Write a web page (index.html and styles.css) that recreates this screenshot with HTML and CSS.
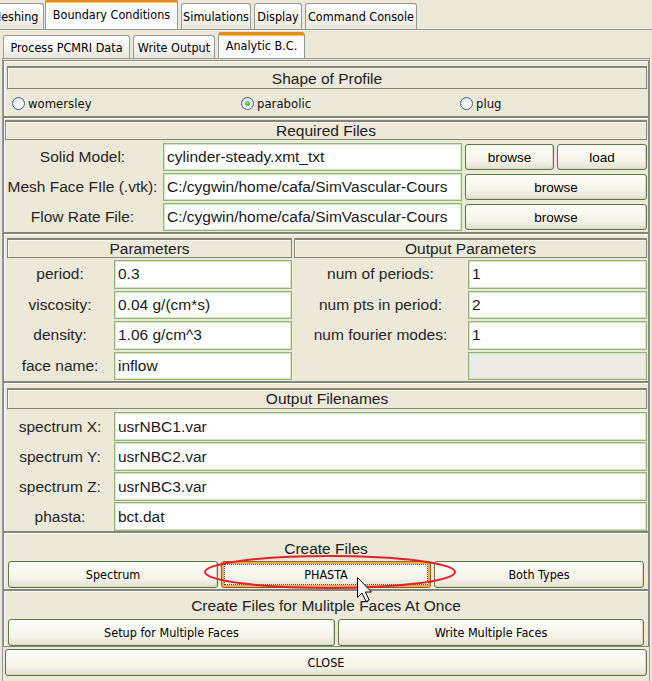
FILE: index.html
```html
<!DOCTYPE html>
<html>
<head>
<meta charset="utf-8">
<link rel="stylesheet" href="styles.css">
</head>
<body>
<div class="tabs1">
  <div class="tab t-mesh">Meshing</div>
  <div class="tab sel t-bc">Boundary Conditions</div>
  <div class="tab t-sim">Simulations</div>
  <div class="tab t-disp">Display</div>
  <div class="tab t-cc">Command Console</div>
</div>
<div class="tabs2">
  <div class="tab t-pc">Process PCMRI Data</div>
  <div class="tab t-wo">Write Output</div>
  <div class="tab sel t-abc">Analytic B.C.</div>
</div>
<div class="pane">
  <div class="sec s1">
    <div class="hdr">Shape of Profile</div>
    <div class="radios">
      <div class="radio"><span class="rb"></span>womersley</div>
      <div class="radio"><span class="rb on"></span>parabolic</div>
      <div class="radio"><span class="rb"></span>plug</div>
    </div>
  </div>
  <div class="sec s2">
    <div class="hdr">Required Files</div>
    <div class="req">
      <div class="lbl">Solid Model:</div>
      <div class="entry">cylinder-steady.xmt_txt</div>
      <div class="btn bt">browse</div>
      <div class="btn bt">load</div>
      <div class="lbl">Mesh Face FIle (.vtk):</div>
      <div class="entry">C:/cygwin/home/cafa/SimVascular-Cours</div>
      <div class="btn bt span2">browse</div>
      <div class="lbl">Flow Rate File:</div>
      <div class="entry">C:/cygwin/home/cafa/SimVascular-Cours</div>
      <div class="btn bt span2">browse</div>
    </div>
  </div>
  <div class="sec s3">
    <div class="sub">
      <div class="hdr">Parameters</div>
      <div class="pgrid pl">
        <div class="lbl">period:</div><div class="entry">0.3</div>
        <div class="lbl">viscosity:</div><div class="entry">0.04 g/(cm*s)</div>
        <div class="lbl">density:</div><div class="entry">1.06 g/cm^3</div>
        <div class="lbl">face name:</div><div class="entry">inflow</div>
      </div>
    </div>
    <div class="sub">
      <div class="hdr">Output Parameters</div>
      <div class="pgrid pr">
        <div class="lbl">num of periods:</div><div class="entry">1</div>
        <div class="lbl">num pts in period:</div><div class="entry">2</div>
        <div class="lbl">num fourier modes:</div><div class="entry">1</div>
        <div class="lbl"></div><div class="entry dis"></div>
      </div>
    </div>
  </div>
  <div class="sec s4">
    <div class="hdr h21">Output Filenames</div>
    <div class="ogrid">
      <div class="lbl">spectrum X:</div><div class="entry">usrNBC1.var</div>
      <div class="lbl">spectrum Y:</div><div class="entry">usrNBC2.var</div>
      <div class="lbl">spectrum Z:</div><div class="entry">usrNBC3.var</div>
      <div class="lbl">phasta:</div><div class="entry">bct.dat</div>
    </div>
  </div>
  <div class="sec s5">
    <div class="title">Create Files</div>
    <div class="brow3">
      <div class="btn">Spectrum</div>
      <div class="btn focus">PHASTA</div>
      <div class="btn">Both Types</div>
    </div>
  </div>
  <div class="sec s6">
    <div class="title">Create Files for Mulitple Faces At Once</div>
    <div class="brow2">
      <div class="btn">Setup for Multiple Faces</div>
      <div class="btn">Write Multiple Faces</div>
    </div>
  </div>
  <div class="btn close">CLOSE</div>
</div>

<svg class="ring" width="262" height="40" viewBox="0 0 262 40">
  <ellipse cx="130" cy="19" rx="125" ry="16" fill="none" stroke="#e4222c" stroke-width="2"/>
</svg>
<svg class="cursor" width="18" height="28" viewBox="0 0 18 28">
  <path d="M1.5 1.5 L1.5 21.5 L6 17 L10 25.5 L13.2 24 L9.4 16 L15.5 16 Z" fill="#fff" stroke="#000" stroke-width="1" stroke-linejoin="miter"/>
</svg>
</body>
</html>
```
FILE: styles.css
```css
* { box-sizing: border-box; }
html, body { margin: 0; padding: 0; }
body {
  width: 652px;
  height: 681px;
  overflow: hidden;
  background: #ECE9D8;
  font-family: "Liberation Sans", Arial, sans-serif;
  color: #1a1a1a;
  position: relative;
}

/* ---------- tabs ---------- */
.tabs1 {
  display: flex;
  align-items: flex-end;
  height: 30px;
  border-bottom: 1px solid #919b9c;
  overflow: hidden;
}
.tabs2 {
  display: flex;
  align-items: flex-end;
  height: 26px;
  margin-top: 2px;
  padding-left: 3px;
}
.tab {
  flex: none;
  font-family: "DejaVu Sans Condensed", "DejaVu Sans", sans-serif;
  font-stretch: condensed;
  font-size: 12.5px;
  color: #000;
  height: 26px;
  border: 1px solid #919b9c;
  border-bottom: none;
  border-radius: 3px 3px 0 0;
  background: linear-gradient(#ffffff, #f4f3ee 60%, #e8e6dc);
  display: flex;
  align-items: center;
  justify-content: center;
  margin-left: 3px;
}
.tabs2 .tab { height: 23px; }
.tab.sel {
  height: 30px;
  background: #fcfcfe;
  border-top: 3px solid #e68b2c;
  box-shadow: inset 0 1px 0 #ffc73c;
  padding-bottom: 3px;
}
.tabs2 .tab.sel { height: 26px; padding-bottom: 2px; }
.t-mesh { width: 58px; margin-left: -14px; }
.t-bc { width: 133px; margin-left: 1px; }
.t-sim { width: 70px; }
.t-disp { width: 48px; }
.t-cc { width: 112px; }
.t-pc { width: 127px; margin-left: 0; }
.t-wo { width: 82px; }
.t-abc { width: 87px; }

/* ---------- pane ---------- */
.pane {
  margin: 0 2px;
  height: 623px;
  border: 1px solid #919b9c;
  border-bottom: none;
  padding-top: 1px;
  display: flex;
  flex-direction: column;
}
.sec {
  border: 1px solid #85857a;
  box-shadow: inset 1px 1px 0 #ffffff;
  flex: none;
}
.hdr {
  height: 20px;
  border: 1px solid #85857a;
  border-top-width: 2px;
  box-shadow: inset 1px 1px 0 #f8f7ef;
  display: flex;
  align-items: center;
  justify-content: center;
  font-size: 15.5px;
  color: #222;
}
.hdr.h21 { height: 21px; }
.s1 .hdr { height: 23px; padding-top: 1px; }

.lbl {
  display: flex;
  align-items: center;
  justify-content: center;
  font-size: 15.5px;
  color: #262626;
  white-space: nowrap;
}
.entry {
  background: #fff;
  border: 1px solid #93b576;
  box-shadow: inset 0 0 0 1px #d3e3c3;
  display: flex;
  align-items: center;
  padding-left: 3px;
  font-size: 15.5px;
  color: #1a1a1a;
  white-space: nowrap;
  overflow: hidden;
}
.entry.dis { background: #ebeae3; }

.btn {
  border: 1px solid #5b7a41;
  border-radius: 3px;
  background: linear-gradient(#fefefa, #f5f4ea 65%, #e4e1cd);
  box-shadow: inset -1px -1px 0 #d8d5c0;
  display: flex;
  align-items: center;
  justify-content: center;
  font-family: "DejaVu Sans Condensed", "DejaVu Sans", sans-serif;
  font-stretch: condensed;
  font-size: 12.5px;
  color: #000;
  white-space: nowrap;
}
.btn.bt {
  font-family: "Liberation Sans", Arial, sans-serif;
  font-stretch: normal;
  font-size: 13.5px;
  margin: 1px 0;
}
.btn.focus {
  border-color: #9a5e1c;
  box-shadow: inset 0 0 0 2px #eeac4e;
  outline: 1px dotted #4a4a4a;
  outline-offset: -4px;
}

/* ---------- S1 ---------- */
.s1 { height: 57px; padding: 5px 1px 0 3px; }
.radios {
  height: 27px;
  display: grid;
  grid-template-columns: 229px 219px 1fr;
  align-items: center;
}
.radio {
  display: flex;
  align-items: center;
  gap: 3px;
  padding-left: 5px;
  font-family: "DejaVu Sans Condensed", "DejaVu Sans", sans-serif;
  font-stretch: condensed;
  font-size: 13px;
  color: #111;
  margin-top: 2px;
}
.rb {
  width: 13px;
  height: 13px;
  border-radius: 50%;
  border: 1px solid #3b6191;
  background: radial-gradient(circle at 65% 70%, #ffffff 20%, #e4e3dc 75%, #cfcec6);
  display: flex;
  align-items: center;
  justify-content: center;
}
.rb.on::after {
  content: "";
  width: 5px;
  height: 5px;
  border-radius: 50%;
  background: radial-gradient(circle at 40% 40%, #7cf07c, #1c9a1c);
}

/* ---------- S2 ---------- */
.s2 { height: 116px; padding: 2px 1px 1px 1px; }
.req {
  margin-top: 3px;
  display: grid;
  grid-template-columns: 155px 299px 89px 90px;
  grid-auto-rows: 28px;
  column-gap: 3px;
  row-gap: 2px;
}
.req .lbl { justify-content: center; }
.span2 { grid-column: span 2; }

/* ---------- S3 ---------- */
.s3 {
  height: 149px;
  padding: 4px 1px 1px 3px;
  display: grid;
  grid-template-columns: 285px 1fr;
  column-gap: 2px;
}
.pgrid {
  margin-top: 2px;
  display: grid;
  grid-auto-rows: 28.5px;
  row-gap: 2px;
  column-gap: 1px;
}
.pl { grid-template-columns: 106px 1fr; }
.pr { grid-template-columns: 173px 1fr; }

/* ---------- S4 ---------- */
.s4 { height: 150px; padding: 5px 1px 0 3px; }
.ogrid {
  margin-top: 3px;
  display: grid;
  grid-template-columns: 106px 1fr;
  grid-auto-rows: 29px;
  row-gap: 1px;
  column-gap: 1px;
}

/* ---------- S5 / S6 ---------- */
.title {
  height: 20px;
  display: flex;
  align-items: center;
  justify-content: center;
  font-size: 15.5px;
  color: #222;
}
.s5 { height: 58px; padding: 6px 4px 1px; }
.s6 { height: 57px; padding: 5px 4px 0; }
.brow3 {
  margin-top: 2px;
  height: 27px;
  display: grid;
  grid-template-columns: 1fr 1fr 1fr;
  column-gap: 3px;
}
.brow2 {
  margin-top: 3px;
  height: 27px;
  display: grid;
  grid-template-columns: 327px 1fr;
  column-gap: 3px;
}
.close {
  margin: 2px 2px 0;
  height: 27px;
  flex: none;
}

/* ---------- overlays ---------- */
.ring { position: absolute; left: 200px; top: 553px; }
.cursor { position: absolute; left: 356px; top: 576px; }
```
